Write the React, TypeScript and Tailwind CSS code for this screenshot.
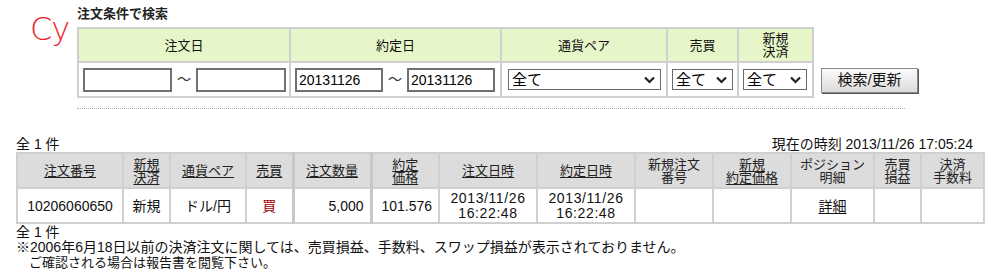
import { type ReactNode } from 'react'

const FONT = { fontFamily: '"Liberation Sans", "Noto Sans CJK JP", sans-serif' }

/* ── small widgets ───────────────────────────── */
function TextBox({ value, w }: { value?: string; w: string }) {
  return (
    <input
      readOnly
      value={value ?? ''}
      className={`${w} h-[24px] border-2 border-[#707070] bg-white px-[2px] text-[14px] text-black outline-none`}
    />
  )
}

function Select({ w, label }: { w: string; label: string }) {
  return (
    <div className={`relative ${w} h-[21px] border border-[#6a6a6a] bg-white`}>
      <span className="absolute left-[3px] top-[1px] text-[15px] leading-[18px] text-black">{label}</span>
      <svg className="absolute right-[5px] top-[6px]" width="11" height="8" viewBox="0 0 11 8">
        <path d="M1 1.5 L5.5 6 L10 1.5" fill="none" stroke="#222" strokeWidth="2.2" />
      </svg>
    </div>
  )
}

function Tilde() {
  return <span className="mx-[5px] text-[14px] text-[#333]">～</span>
}

/* ── search panel ────────────────────────────── */
const SEARCH_COLS = [
  { label: '注文日', w: 'w-[212px]' },
  { label: '約定日', w: 'w-[211px]' },
  { label: '通貨ペア', w: 'w-[166px]' },
  { label: '売買', w: 'w-[71px]' },
  { label: '新規\n決済', w: 'w-[75px]' },
]

function SearchPanel() {
  return (
    <div className="flex">
      <div className="w-[77px] pl-[30px] pt-[14px]">
        <span className="text-[32px] leading-[30px] font-light text-[#ee2230] tracking-[-1px]" style={{ fontFamily: '"DejaVu Sans", sans-serif' }}>Cy</span>
      </div>
      <div className="pt-[6px]">
        <p className="text-[13px] leading-[16px] font-bold text-[#222]">注文条件で検索</p>
        <div className="mt-[5px] flex items-end">
          <table className="w-[735px] table-fixed border-collapse border-2 border-[#cfcfcf]">
            <thead>
              <tr className="h-[34px] bg-[#e6f6c8]">
                {SEARCH_COLS.map(c => (
                  <th key={c.label} className={`${c.w} border-2 border-[#cfcfcf] p-0 text-center text-[13px] font-normal leading-[13px] text-[#111] whitespace-pre-line`}>
                    {c.label}
                  </th>
                ))}
              </tr>
            </thead>
            <tbody>
              <tr className="h-[35px]">
                <td className="border-2 border-[#cfcfcf] px-[4px]">
                  <div className="flex items-center">
                    <TextBox w="w-[89px]" />
                    <Tilde />
                    <TextBox w="w-[90px]" />
                  </div>
                </td>
                <td className="border-2 border-[#cfcfcf] px-[4px]">
                  <div className="flex items-center">
                    <TextBox w="w-[88px]" value="20131126" />
                    <Tilde />
                    <TextBox w="w-[88px]" value="20131126" />
                  </div>
                </td>
                <td className="border-2 border-[#cfcfcf] px-[6px]">
                  <Select w="w-[153px]" label="全て" />
                </td>
                <td className="border-2 border-[#cfcfcf] px-[4px]">
                  <Select w="w-[61px]" label="全て" />
                </td>
                <td className="border-2 border-[#cfcfcf] px-[4px]">
                  <Select w="w-[64px]" label="全て" />
                </td>
              </tr>
            </tbody>
          </table>
          <button className="mb-[5px] ml-[7px] h-[25px] w-[97px] border border-[#8a8a8a] bg-gradient-to-b from-[#fbfbfb] to-[#dcdcdc] text-[15px] text-[#111] shadow-[1px_1px_0_#555]">
            検索/更新
          </button>
        </div>
        <div className="mt-[10px] w-[828px] border-t border-dotted border-[#aaa]" />
      </div>
    </div>
  )
}

/* ── results ─────────────────────────────────── */
type Col = { label: string; w: string; link?: boolean; thick?: boolean }

const RESULT_COLS: Col[] = [
  { label: '注文番号', w: 'w-[106px]', link: true },
  { label: '新規\n決済', w: 'w-[47px]', link: true },
  { label: '通貨ペア', w: 'w-[76px]', link: true },
  { label: '売買', w: 'w-[47px]', link: true },
  { label: '注文数量', w: 'w-[78px]', link: true, thick: true },
  { label: '約定\n価格', w: 'w-[68px]', link: true, thick: true },
  { label: '注文日時', w: 'w-[98px]', link: true },
  { label: '約定日時', w: 'w-[98px]', link: true },
  { label: '新規注文\n番号', w: 'w-[78px]' },
  { label: '新規\n約定価格', w: 'w-[78px]', link: true },
  { label: 'ポジション\n明細', w: 'w-[83px]' },
  { label: '売買\n損益', w: 'w-[47px]' },
  { label: '決済\n手数料', w: 'w-[63px]' },
]

function Td({ children, className = 'text-center', thick, red }: { children?: ReactNode; className?: string; thick?: boolean; red?: boolean }) {
  return (
    <td className={`border-2 border-[#d0d0d0] ${thick ? 'border-l-[3px] border-l-[#c8c8c8]' : ''} p-0 text-[14px] leading-[14px] ${red ? 'text-[#a00000]' : 'text-[#111]'} ${className}`}>
      {children}
    </td>
  )
}

function Results() {
  return (
    <div className="px-[16px] pt-[27px] text-[#111]">
      <div className="flex w-[967px] items-end justify-between pr-[10px] text-[14px] leading-[16px]">
        <span>全 1 件</span>
        <span>現在の時刻 2013/11/26 17:05:24</span>
      </div>
      <table className="w-[967px] table-fixed border-collapse border-2 border-[#d0d0d0]">
        <thead>
          <tr className="h-[35px] bg-[#dcdcdc]">
            {RESULT_COLS.map(c => (
              <th
                key={c.label}
                className={`${c.w} border-2 border-[#d0d0d0] ${c.thick ? 'border-l-[3px] border-l-[#c8c8c8]' : ''} p-0 text-center text-[13px] font-normal leading-[13px] text-[#222] whitespace-pre-line`}
              >
                <span className={c.link ? 'underline underline-offset-[2px]' : ''}>{c.label}</span>
              </th>
            ))}
          </tr>
        </thead>
        <tbody>
          <tr className="h-[35px]">
            <Td>10206060650</Td>
            <Td>新規</Td>
            <Td>ドル/円</Td>
            <Td red>買</Td>
            <Td thick className="pr-[6px] text-right">5,000</Td>
            <Td thick className="pr-[6px] text-right">101.576</Td>
            <Td className="text-center text-[13px] leading-[15px] tracking-[0.6px]">2013/11/26<br />16:22:48</Td>
            <Td className="text-center text-[13px] leading-[15px] tracking-[0.6px]">2013/11/26<br />16:22:48</Td>
            <Td />
            <Td />
            <Td><span className="underline underline-offset-[2px]">詳細</span></Td>
            <Td />
            <Td />
          </tr>
        </tbody>
      </table>
      <div className="text-[14px] leading-[14px]">
        <p className="mt-[1px]">全 1 件</p>
        <p className="leading-[16px]">※2006年6月18日以前の決済注文に関しては、売買損益、手数料、スワップ損益が表示されておりません。</p>
        <p className="text-[13px] leading-[16px]">　ご確認される場合は報告書を閲覧下さい。</p>
      </div>
    </div>
  )
}

export default function App() {
  return (
    <div className="h-[279px] w-[995px] overflow-hidden bg-white" style={FONT}>
      <SearchPanel />
      <Results />
    </div>
  )
}
